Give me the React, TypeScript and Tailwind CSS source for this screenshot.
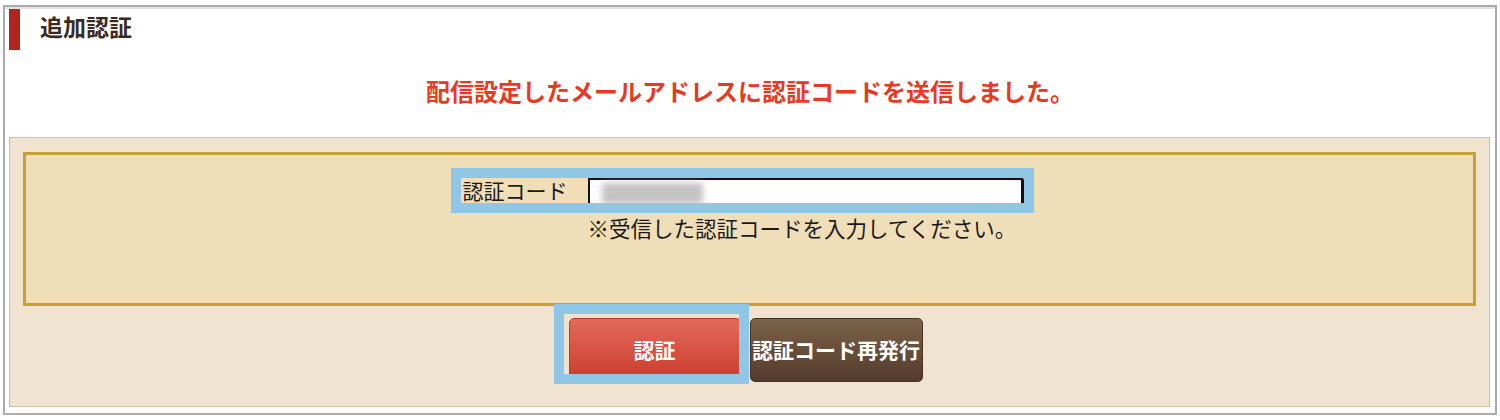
const jp = "font-['Noto_Sans_CJK_JP','Noto_Sans',sans-serif]";

const Highlight = ({ className }: { className: string }) => (
  <div className={`pointer-events-none absolute border-[10px] border-[#90c7e7] ${className}`} />
);

export default function App() {
  return (
    <div className={`${jp} h-[420px] bg-white pt-[5px] px-[3px]`}>
      <div className="h-[410px] border-2 border-[#ababab] flex flex-col">
        <div className="border-t-2 border-[#e3e3e3] flex items-start pl-[4px] h-[126px]">
          <div className="w-[11px] h-[41px] bg-[#b1251f]" />
          <h2 className="ml-[20px] mt-[4px] text-[23px] leading-[26px] font-bold text-[#3c2a1e]">追加認証</h2>
        </div>
        <p className="-mt-[57px] mb-[31px] text-center text-[24px] leading-[30px] font-bold text-[#e63a22]">
          配信設定したメールアドレスに認証コードを送信しました。
        </p>

        <div className="mx-[4px] mr-[5px] h-[270px] border border-[#d6c09b] bg-[#f0e3cf] px-[13px] pt-[14px]">
          <div className="h-[154px] border-[3px] border-[#c9a038] bg-[#f0deb8] pt-[23px]">
            <div className="flex justify-center pr-[15px]">
              <div className="grid grid-cols-[127px_436px]">
                <div className="relative col-span-2 grid grid-cols-[127px_436px] h-[28px]">
                  <label className="pl-[2px] text-[21px] leading-[24px] text-[#1a1a1a]">認証コード</label>
                  <div className="border-2 border-[#111] border-r-[3px] rounded-tr-[2px] bg-white pl-[12px] pt-[3px]">
                    <div className="w-[101px] h-[21px] bg-[#c4c4c4] blur-[3px]" />
                  </div>
                  <Highlight className="-left-[10px] -right-[10px] -top-[10px] h-[45px]" />
                </div>
                <p className="col-start-2 mt-[9px] text-[21.5px] leading-[26px] text-[#1a1a1a] whitespace-nowrap">
                  ※受信した認証コードを入力してください。
                </p>
              </div>
            </div>
          </div>

          <div className="mt-[12px] flex justify-center gap-[9px] pr-[8px]">
            <div className="relative">
              <button
                type="button"
                className="w-[172px] h-[64px] rounded-[5px] border border-[#c0392b] bg-gradient-to-b from-[#e1695b] to-[#cb3a2a] text-white text-[21px] font-bold"
              >
                認証
              </button>
              <Highlight className="-left-[15px] -top-[14px] w-[195px] h-[80px]" />
            </div>
            <button
              type="button"
              className="w-[173px] h-[64px] rounded-[5px] border border-[#4a3224] bg-gradient-to-b from-[#7c634a] to-[#543a2c] text-white text-[21px] font-bold whitespace-nowrap"
            >
              認証コード再発行
            </button>
          </div>
        </div>
      </div>
    </div>
  );
}
